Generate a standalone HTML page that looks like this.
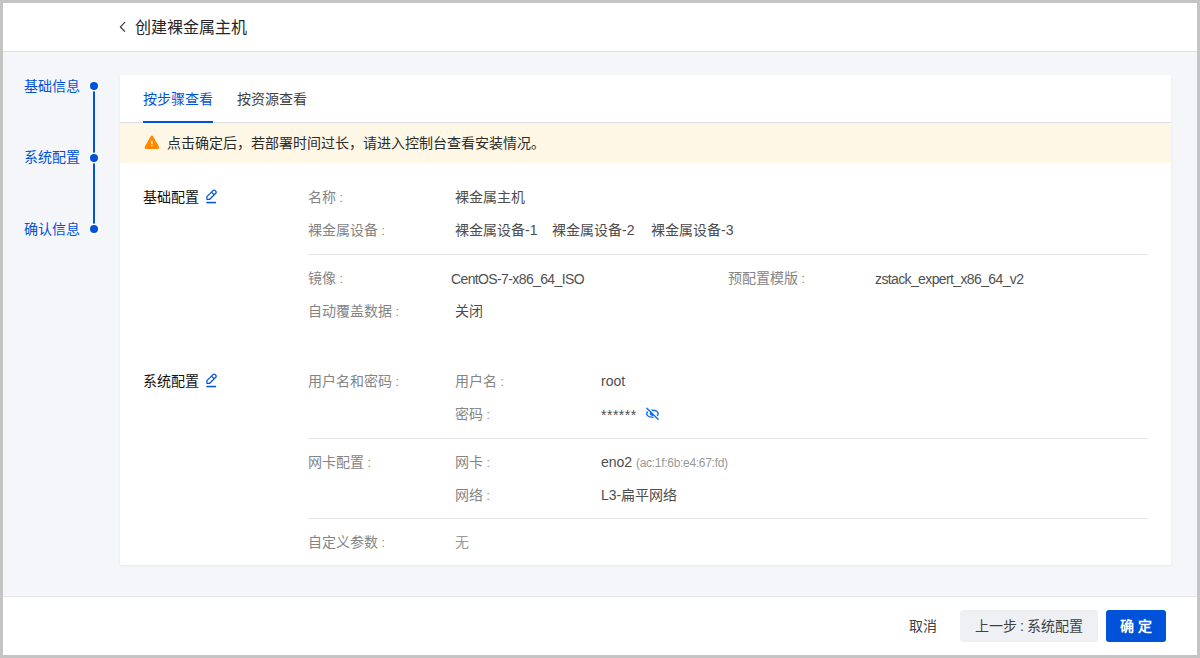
<!DOCTYPE html>
<html lang="zh-CN"><head><meta charset="utf-8">
<style>
*{margin:0;padding:0;box-sizing:border-box}
html,body{width:1200px;height:658px;overflow:hidden;background:#c4c4c4}
body{font-family:"Liberation Sans",sans-serif;font-size:14px;color:#333;position:relative}
.frame{position:absolute;left:3px;top:3px;width:1194px;height:652px;background:#f4f6fa;overflow:hidden}
.abs{position:absolute;white-space:nowrap;line-height:20px}
.header{position:absolute;left:0;top:0;width:1194px;height:49px;background:#fff;border-bottom:1px solid #dde0e5}
.footer{position:absolute;left:0;top:593px;width:1194px;height:59px;background:#fff;border-top:1px solid #e3e5ea}
.card{position:absolute;left:117px;top:72px;width:1051px;height:490px;background:#fff;border-radius:2px;box-shadow:0 1px 3px rgba(0,0,0,0.06)}
.step{color:#0052d9}
.dot{position:absolute;width:8px;height:8px;border-radius:50%;background:#0052d9;box-shadow:0 0 0 1.5px #fff}
.vline{position:absolute;width:2px;background:#0052d9}
.lbl{color:#858585}
.val{color:#4d4d4d}
.hr{position:absolute;height:1px;background:#e3e5ea}
.sec{font-weight:500;color:#111}
i.c{font-style:normal;display:inline-block;width:14px;padding-left:3.5px;font-size:12px}
</style></head><body>
<div class="frame">
  <div class="header">
    <svg style="position:absolute;left:115px;top:17px" width="10" height="14" viewBox="0 0 10 14"><path d="M7 2.2 L2.4 6.9 L6.9 11.7" fill="none" stroke="#333" stroke-width="1.2"/></svg>
    <div class="abs" style="left:132px;top:15px;font-size:16px;line-height:20px;color:#262626">创建裸金属主机</div>
  </div>

  <!-- steps -->
  <div class="abs step" style="left:21px;top:73px">基础信息</div>
  <div class="abs step" style="left:21px;top:144px">系统配置</div>
  <div class="abs step" style="left:21px;top:216px">确认信息</div>
  <div class="vline" style="left:90px;top:83px;height:143px"></div>
  <div class="dot" style="left:87px;top:79px"></div>
  <div class="dot" style="left:87px;top:150.5px"></div>
  <div class="dot" style="left:87px;top:222px"></div>

  <div class="card">
    <div class="abs" style="left:23px;top:14px;color:#0052d9">按步骤查看</div>
    <div class="abs" style="left:117px;top:14px;color:#404040">按资源查看</div>
    <div style="position:absolute;left:0;top:47px;width:1051px;height:1px;background:#dcdfe6"></div>
    <div style="position:absolute;left:23px;top:46px;width:70px;height:2px;background:#0052d9"></div>
    <div style="position:absolute;left:0;top:48px;width:1051px;height:39.5px;background:#fef7e6"></div>
    <svg style="position:absolute;left:24px;top:60px" width="16" height="15" viewBox="0 0 16 15"><path d="M6.6 1.5 Q7.9 -0.5 9.2 1.5 L14.8 11.3 Q15.9 14 13.2 14 L2.6 14 Q-0.1 14 1.0 11.3 Z" fill="#ff8800"/><rect x="7.25" y="5.8" width="1.3" height="3.3" rx="0.3" fill="#fff"/><rect x="7.25" y="10" width="1.3" height="1.1" fill="#fff"/></svg>
    <div class="abs" style="left:47px;top:58px;color:#2b2b2b">点击确定后，若部署时间过长，请进入控制台查看安装情况。</div>

    <!-- 基础配置 -->
    <div class="abs sec" style="left:23px;top:112px">基础配置</div>
    <svg style="position:absolute;left:82px;top:111px" width="20" height="20" viewBox="0 0 20 20"><path d="M4.9 13.3 L4.9 10.6 L11 4.6 Q12.1 3.5 13.2 4.6 L13.7 5.1 Q14.8 6.2 13.7 7.3 L7.7 13.3 Z" fill="none" stroke="#0052d9" stroke-width="1.25" stroke-linejoin="round"/><path d="M9.5 6.1 L12.3 8.9" stroke="#0052d9" stroke-width="1.25"/><path d="M4.3 16.55 L14.1 16.55" stroke="#0052d9" stroke-width="1.5"/></svg>
    <div class="abs lbl" style="left:188px;top:112px">名称<i class="c">:</i></div>
    <div class="abs val" style="left:335px;top:112px">裸金属主机</div>
    <div class="abs lbl" style="left:188px;top:145px">裸金属设备<i class="c">:</i></div>
    <div class="abs val" style="left:335px;top:145px">裸金属设备-1</div>
    <div class="abs val" style="left:432px;top:145px">裸金属设备-2</div>
    <div class="abs val" style="left:531px;top:145px">裸金属设备-3</div>
    <div class="hr" style="left:188px;top:179px;width:840px"></div>
    <div class="abs lbl" style="left:188px;top:193px">镜像<i class="c">:</i></div>
    <div class="abs val" style="left:331px;top:194px;letter-spacing:-0.62px;color:#505050">CentOS-7-x86_64_ISO</div>
    <div class="abs lbl" style="left:608px;top:193px">预配置模版<i class="c">:</i></div>
    <div class="abs val" style="left:755px;top:194px;letter-spacing:-0.62px;color:#505050">zstack_expert_x86_64_v2</div>
    <div class="abs lbl" style="left:188px;top:226px">自动覆盖数据<i class="c">:</i></div>
    <div class="abs val" style="left:335px;top:226px">关闭</div>

    <!-- 系统配置 -->
    <div class="abs sec" style="left:23px;top:296px">系统配置</div>
    <svg style="position:absolute;left:82px;top:295px" width="20" height="20" viewBox="0 0 20 20"><path d="M4.9 13.3 L4.9 10.6 L11 4.6 Q12.1 3.5 13.2 4.6 L13.7 5.1 Q14.8 6.2 13.7 7.3 L7.7 13.3 Z" fill="none" stroke="#0052d9" stroke-width="1.25" stroke-linejoin="round"/><path d="M9.5 6.1 L12.3 8.9" stroke="#0052d9" stroke-width="1.25"/><path d="M4.3 16.55 L14.1 16.55" stroke="#0052d9" stroke-width="1.5"/></svg>
    <div class="abs lbl" style="left:188px;top:296px">用户名和密码<i class="c">:</i></div>
    <div class="abs lbl" style="left:335px;top:296px">用户名<i class="c">:</i></div>
    <div class="abs val" style="left:481px;top:296px">root</div>
    <div class="abs lbl" style="left:335px;top:329px">密码<i class="c">:</i></div>
    <div class="abs val" style="left:481px;top:330px;letter-spacing:0.5px">******</div>
    <svg style="position:absolute;left:522px;top:329px" width="20" height="20" viewBox="0 0 20 20"><ellipse cx="10.45" cy="9.65" rx="5.7" ry="3.5" fill="none" stroke="#0f6fff" stroke-width="1.5"/><path d="M4.9 4.3 L16.1 15.2" stroke="#fff" stroke-width="3.4"/><path d="M8.4 7.7 L11.8 11.1 A2.4 2.4 0 0 1 8.4 7.7 Z" fill="#0f6fff"/><path d="M4.9 4.3 L16.1 15.2" stroke="#0f6fff" stroke-width="1.5" stroke-linecap="round"/></svg>
    <div class="hr" style="left:188px;top:363px;width:840px"></div>
    <div class="abs lbl" style="left:188px;top:377px">网卡配置<i class="c">:</i></div>
    <div class="abs lbl" style="left:335px;top:377px">网卡<i class="c">:</i></div>
    <div class="abs val" style="left:481px;top:377px">eno2 <span style="font-size:12px;color:#999;letter-spacing:-0.3px">(ac:1f:6b:e4:67:fd)</span></div>
    <div class="abs lbl" style="left:335px;top:410px">网络<i class="c">:</i></div>
    <div class="abs val" style="left:481px;top:410px">L3-扁平网络</div>
    <div class="hr" style="left:188px;top:443px;width:840px"></div>
    <div class="abs lbl" style="left:188px;top:457px">自定义参数<i class="c">:</i></div>
    <div class="abs" style="left:335px;top:457px;color:#999">无</div>
  </div>

  <div class="footer">
    <div class="abs" style="left:906px;top:19px;color:#404040">取消</div>
    <div style="position:absolute;left:957px;top:13px;width:138px;height:31.5px;border-radius:3px;background:#eef0f4"></div>
    <div class="abs" style="left:972px;top:19px;color:#404040">上一步<span style="display:inline-block;width:10px;text-align:center">:</span>系统配置</div>
    <div style="position:absolute;left:1103px;top:13px;width:60px;height:31.5px;border-radius:3px;background:#0052d9"></div>
    <div class="abs" style="left:1117px;top:19px;color:#fff;font-weight:700;letter-spacing:4px">确定</div>
  </div>
</div>
</body></html>
